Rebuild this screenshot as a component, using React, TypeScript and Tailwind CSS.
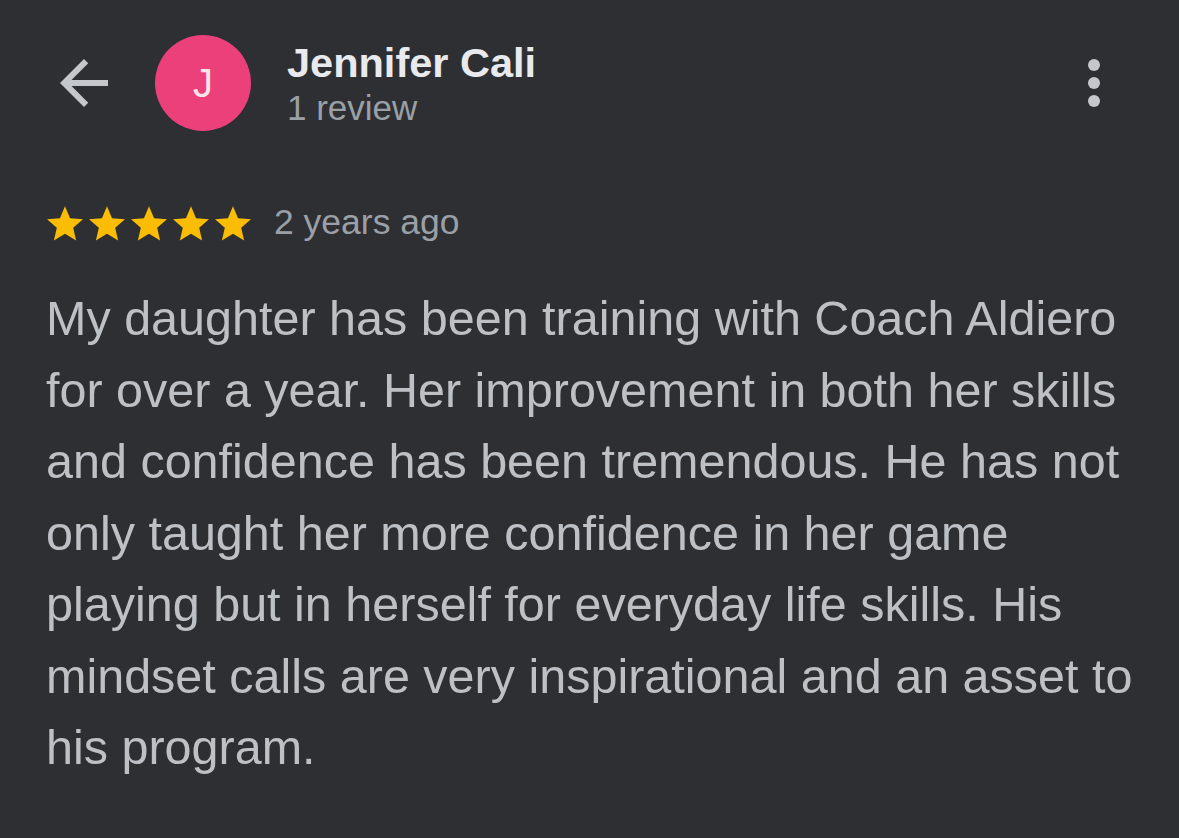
import React from 'react';

const reviewLines = [
  'My daughter has been training with Coach Aldiero',
  'for over a year. Her improvement in both her skills',
  'and confidence has been tremendous. He has not',
  'only taught her more confidence in her game',
  'playing but in herself for everyday life skills. His',
  'mindset calls are very inspirational and an asset to',
  'his program.',
];

const Star = () => (
  <svg viewBox="2 2 20 19.1" className="w-[36px] h-[35px]" fill="#fbbc04">
    <path d="M12 17.27L18.18 21l-1.64-7.03L22 9.24l-7.19-.61L12 2 9.19 8.63 2 9.24l5.46 4.73L5.82 21z" />
  </svg>
);

export default function App() {
  return (
    <div
      className="w-full min-h-screen h-[838px] bg-[#2e2f33] overflow-hidden"
      style={{ fontFamily: '"Liberation Sans", Arial, sans-serif' }}
    >
      {/* Header */}
      <div className="flex items-center h-[96px] mt-[35px] pl-[48px] pr-[49px]">
        <svg viewBox="0 0 24 24" className="w-[72px] h-[72px] shrink-0" fill="#c4c7cc">
          <path d="M20 11H7.83l5.59-5.59L12 4l-8 8 8 8 1.41-1.41L7.83 13H20v-2z" />
        </svg>
        <div className="ml-[35px] w-[96px] h-[96px] rounded-full bg-[#ec407a] flex items-center justify-center shrink-0">
          <span className="text-[#fce4ec] text-[40px] leading-none">J</span>
        </div>
        <div className="ml-[36px] flex flex-col">
          <span className="text-[41.5px] leading-[46px] font-bold text-[#e8eaed]">Jennifer Cali</span>
          <span className="mt-[3px] text-[35px] leading-[38px] text-[#9aa0a6]">1 review</span>
        </div>
        <div className="flex-1" />
        <svg viewBox="0 0 24 24" className="w-[72px] h-[72px] shrink-0" fill="#c4c7cc">
          <circle cx="12" cy="6" r="2" />
          <circle cx="12" cy="12" r="2" />
          <circle cx="12" cy="18" r="2" />
        </svg>
      </div>

      {/* Rating */}
      <div className="flex items-center h-[40px] mt-[72px] pl-[47px]">
        <div className="flex gap-[6px]">
          <Star />
          <Star />
          <Star />
          <Star />
          <Star />
        </div>
        <span className="ml-[23px] text-[35.5px] text-[#9aa0a6]">2 years ago</span>
      </div>

      {/* Review text */}
      <div className="mt-[40px] pl-[46px] text-[48.5px] leading-[71.5px] text-[#bdc1c6]">
        {reviewLines.map((line) => (
          <div key={line} className="whitespace-nowrap">
            {line}
          </div>
        ))}
      </div>
    </div>
  );
}
